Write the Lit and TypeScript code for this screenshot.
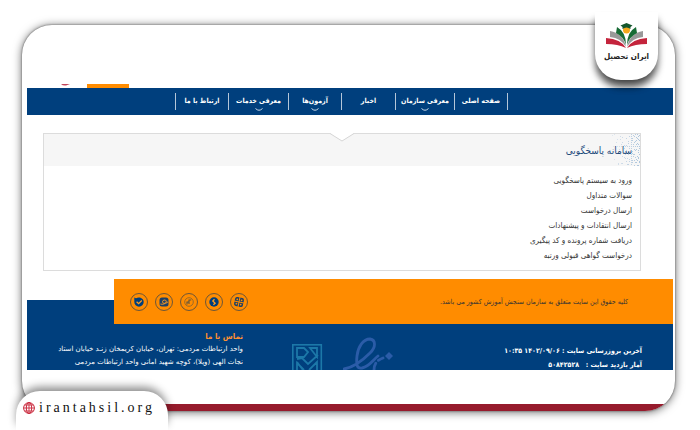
import { LitElement, html, css, svg } from "lit";
import { customElement } from "lit/decorators.js";

const NAV = [
  { label: "صفحه اصلی", menu: false },
  { label: "معرفی سازمان", menu: true },
  { label: "اخبار", menu: false },
  { label: "آزمون‌ها", menu: true },
  { label: "معرفی خدمات", menu: true },
  { label: "ارتباط با ما", menu: false },
];

const SERVICES = [
  "ورود به سیستم پاسخگویی",
  "سوالات متداول",
  "ارسال درخواست",
  "ارسال انتقادات و پیشنهادات",
  "دریافت شماره پرونده و کد پیگیری",
  "درخواست گواهی قبولی ورتبه",
];

const SOCIAL = [
  {
    name: "آپارات",
    glyph: svg`<g transform="rotate(12 9 9)"><rect x="4.500" y="4.500" width="9" height="9" rx="2" fill="#1d4068"/><path d="M9 4v10M4 9h10" stroke="#ff8c00" stroke-width="1"/><circle cx="6.800" cy="6.800" r=".9" fill="#ff8c00"/><circle cx="11.200" cy="6.800" r=".9" fill="#ff8c00"/><circle cx="6.800" cy="11.200" r=".9" fill="#ff8c00"/><circle cx="11.200" cy="11.200" r=".9" fill="#ff8c00"/></g>`,
  },
  {
    name: "سروش",
    glyph: svg`<circle cx="9" cy="9" r="4.700" fill="#003f7d"/><path d="M9.500 6.200 7.800 8l2.300 2.200-1.700 1.600" fill="none" stroke="#ff9c20" stroke-width="1.300"/>`,
  },
  {
    name: "روبیکا",
    glyph: svg`<circle cx="9" cy="9" r="4.300" fill="none" stroke="#9a6a2a" stroke-width="1"/><path d="M7 11.500v-2.500h2V7h2.200M9 9v2" fill="none" stroke="#5c5440" stroke-width="1.100"/>`,
  },
  {
    name: "ایتا",
    glyph: svg`<rect x="4.500" y="4.500" width="9" height="9" rx="2.500" fill="#1d4068"/><path d="M5.500 11c3 1 6-1 5.800-3-.3-1.500-3.800-1.300-3.800.6 0 2.400 3.500 2.200 5.500.2" fill="none" stroke="#ff9c20" stroke-width="1"/>`,
  },
  {
    name: "بله",
    glyph: svg`<path d="M4.300 4.500 6 5.300c3-1.900 7.700-.2 7.700 3.700A4.700 4.700 0 0 1 4.300 9z" fill="#003f7d"/><path d="m6.600 8.800 2 1.900 3.200-3.200" fill="none" stroke="#ff9c20" stroke-width="1.300"/>`,
  },
];

@customElement("app-root")
export class AppRoot extends LitElement {
  static styles = css`
    :host {
      display: block;
      position: relative;
      box-sizing: border-box;
      padding: 25px 25px 19px 22px;
      overflow: hidden;
      background: #fff;
      font-family: "DejaVu Sans Condensed", "DejaVu Sans", sans-serif;
      font-size: 8px;
      color: #333;
    }
    a {
      color: inherit;
      text-decoration: none;
    }
    ul {
      list-style: none;
      margin: 0;
      padding: 0;
    }
    h1,
    h2,
    p {
      margin: 0;
    }
    svg {
      display: block;
    }
    .card {
      border-radius: 30px;
      overflow: hidden;
      background: #fff;
      padding-top: 59px;
      box-shadow: 0 0 2px #555, 0 1px 10px rgba(0, 0, 0, 0.6);
    }
    .strip {
      height: 7px;
      margin-top: 34px;
      background: #961b2c;
    }
    .site {
      direction: rtl;
      margin: 0 2px 0 5px;
    }
    .top {
      display: flex;
      direction: ltr;
      height: 4px;
    }
    .mark {
      margin-left: 34px;
      width: 9px;
    }
    .tab {
      margin-left: 17px;
      width: 42px;
      background: #ff8c00;
    }
    nav {
      background: #003f7d;
      padding: 5px 165px 5px 148px;
    }
    .menu {
      display: grid;
      grid-template-columns: 53fr 59fr 54fr 53fr 60fr 53fr;
      border-right: 1px solid #b4c6d9;
      color: #fff;
      font-weight: bold;
      font-size: 7px;
    }
    .menu li {
      border-left: 1px solid #b4c6d9;
    }
    .menu a {
      position: relative;
      display: block;
      text-align: center;
      line-height: 17px;
      white-space: nowrap;
    }
    .arrow {
      position: absolute;
      left: 50%;
      bottom: -1px;
      margin-left: -4px;
    }
    .panel {
      margin: 18px 32px 0 16px;
      border: 1px solid #dcdcdc;
      padding-bottom: 7px;
    }
    .head {
      position: relative;
      display: flex;
      align-items: center;
      justify-content: flex-start;
      height: 32px;
      padding-right: 8px;
      background: #f6f6f6;
    }
    .head h1 {
      position: relative;
      font-size: 10px;
      font-weight: normal;
      color: #1d4a7c;
    }
    .dots {
      position: absolute;
      right: 0;
      top: 0;
    }
    .notch {
      position: absolute;
      left: 50%;
      top: -1px;
      margin-left: -12px;
    }
    .list {
      padding: 7px 8px 0 0;
      line-height: 15px;
    }
    footer {
      margin-top: 29px;
      background: #003f7d;
      color: #fff;
    }
    .bar {
      position: relative;
      top: -21px;
      display: flex;
      align-items: center;
      justify-content: space-between;
      height: 45px;
      margin: 0 0 -21px 87px;
      padding: 0 45px 0 16px;
      box-sizing: border-box;
      background: #ff8c00;
      color: #333;
      font-size: 7px;
    }
    .social {
      display: flex;
      gap: 7px;
    }
    .social a {
      display: block;
    }
    .info {
      display: flex;
      justify-content: space-between;
      height: 46px;
      padding: 0 31px 0 32px;
      overflow: hidden;
      font-size: 7px;
      line-height: 14px;
    }
    .stats {
      width: 200px;
      padding-top: 20px;
      font-weight: bold;
    }
    .emblems {
      display: flex;
      direction: ltr;
      gap: 20px;
      padding-top: 12px;
    }
    .contact {
      width: 184px;
      padding-top: 7px;
      white-space: nowrap;
      font-family: "DejaVu Sans", sans-serif;
      line-height: 13px;
    }
    .contact h2 {
      font-family: "DejaVu Sans Condensed", "DejaVu Sans", sans-serif;
      font-size: 8px;
      line-height: 12px;
      color: #ff9030;
    }
    .brand {
      position: absolute;
      right: 42px;
      top: 12px;
      width: 63px;
      height: 68px;
      border-radius: 0 0 26px 26px;
      background: #fff;
      box-shadow: 0 7px 8px -2px rgba(0, 0, 0, 0.7), 0 8px 6px rgba(0, 0, 0, 0.25);
      text-align: center;
      direction: rtl;
      font-weight: bold;
      font-size: 8px;
      line-height: 16px;
      color: #222;
    }
    .brand svg {
      margin: 11px auto 0;
    }
    .domain {
      position: absolute;
      left: 16px;
      bottom: 0;
      display: flex;
      align-items: center;
      gap: 4px;
      width: 152px;
      height: 39px;
      box-sizing: border-box;
      padding: 0 0 5px 7px;
      border-radius: 24px 24px 0 0;
      background: #fff;
      box-shadow: 0 -5px 8px -1px rgba(0, 0, 0, 0.45);
      font-family: "Liberation Serif", serif;
      font-size: 14px;
      letter-spacing: 3px;
      color: #111;
    }
  `;

  private dots() {
    const marks = [];
    for (let row = 0; row < 16; row++) {
      for (let col = 0; col < 14; col++) {
        const seed = (row * 37 + col * 53 + row * col * 11) % 17;
        if (seed < col + 2) {
          marks.push(svg`<rect x=${col * 2 + (seed % 2)} y=${row * 2 + (seed % 3 ? 0 : 1)} width="1" height="1" fill="#a9c3dc" opacity=${0.3 + col / 20}></rect>`);
        }
      }
    }
    return html`<svg class="dots" width="28" height="32" aria-hidden="true">${marks}</svg>`;
  }

  render() {
    return html`
      <div class="card">
        <div class="site">
          <div class="top">
            <svg class="mark" viewBox="0 0 9 4" aria-hidden="true"><path d="M0 0h9L5 1.500Q2 2 0 0" fill="#c2455a" /></svg>
            <span class="tab"></span>
          </div>
          <nav>
            <ul class="menu">
              ${NAV.map(
                (item) => html`<li>
                  <a href="#">${item.label}${item.menu
                    ? html`<svg class="arrow" width="8" height="3" viewBox="0 0 8 3"><path d="M.5.5Q4 4 7.500.5" fill="none" stroke="#c8d8e8" /></svg>`
                    : ""}</a>
                </li>`
              )}
            </ul>
          </nav>
          <main class="panel">
            <div class="head">
              ${this.dots()}
              <svg class="notch" width="24" height="9" viewBox="0 0 24 9" aria-hidden="true">
                <path d="M0 0h24L12 8z" fill="#fff" /><path d="M0 .5 12 8 24 .5" fill="none" stroke="#d6d6d6" />
              </svg>
              <h1>سامانه پاسخگویی</h1>
            </div>
            <ul class="list">
              ${SERVICES.map((text) => html`<li><a href="#">${text}</a></li>`)}
            </ul>
          </main>
          <footer>
            <div class="bar">
              <p>کلیه حقوق این سایت متعلق به سازمان سنجش آموزش کشور می باشد.</p>
              <div class="social">
                ${SOCIAL.map(
                  (item) => html`<a href="#" aria-label=${item.name}
                    ><svg width="18" height="18" viewBox="0 0 18 18"><circle cx="9" cy="9" r="8.500" fill="none" stroke="#5b503f" stroke-width=".9" />${item.glyph}</svg></a
                  >`
                )}
              </div>
            </div>
            <div class="info">
              <div class="stats">
                <p>آخرین بروزرسانی سایت : ۱۴۰۲/۰۹/۰۶ ۱۰:۳۵</p>
                <p>آمار بازدید سایت : &nbsp; ۵۰۸۴۲۵۲۸</p>
              </div>
              <div class="emblems" aria-hidden="true">
                <svg width="32" height="34" viewBox="0 0 32 34" fill="none" stroke="#1c78a8">
                  <rect x="1.800" y="8.800" width="28.500" height="40" stroke-width="1.600" />
                  <path d="M6 21v-9h7l4 4-4 5zM19 12h7v9zM6 23l5-1 6 6L27 19M6 34v-7l7 7M18 34l8-8v8M12 34l-6-8" stroke-width="1.800" />
                </svg>
                <svg width="52" height="34" viewBox="0 0 52 34" fill="none" stroke="#2b5ca8" stroke-width="2.800" stroke-linecap="round">
                  <path d="M1 33C12 31 20 24 27 17C33 11 33 4 27 3C20 3 15 11 14 20C13 29 14 33 19 32C26 31 30 24 35 20" />
                  <path d="M31 34Q31 25 40 22" stroke-dasharray="7 4" /><path d="m46 16 4 4-4 4-4-4z" fill="#2b5ca8" stroke="none" />
                </svg>
              </div>
              <div class="contact">
                <h2>تماس با ما</h2>
                <p>واحد ارتباطات مردمی: تهران، خیابان کریمخان زنـد خیابان استاد</p>
                <p>نجات الهی (ویلا)، کوچه شهید امانی واحد ارتباطات مردمی</p>
              </div>
            </div>
          </footer>
        </div>
        <div class="strip"></div>
      </div>
      <div class="brand">
        <svg width="41" height="26" viewBox="0 0 41 26" aria-hidden="true">
          <path d="M0 15q15 1 20 10-8-4-20-4zM41 15q-15 1-20 10 8-4 20-4z" fill="#c4243c" />
          <path d="M4 8q13 2 16 16Q15 15 4 14zM37 8q-13 2-16 16 5-9 16-10z" fill="#999" />
          <path d="M11 4q9 5 9 18Q18 14 10 10zM30 4q-9 5-9 18 2-8 10-12z" fill="#176b35" />
          <circle cx="20.500" cy="7" r="3.500" fill="#f4a81c" />
          <path d="m20.500 0 6 2.500-2 1.500v2q-4-3-8 0V4l-2-1.500z" fill="#14562c" />
        </svg>
        ایران تحصیل
      </div>
      <a class="domain" href="#">
        <svg width="12" height="12" viewBox="0 0 12 12" fill="none" stroke="#c9283c" aria-hidden="true">
          <circle cx="6" cy="6" r="5.400" /><ellipse cx="6" cy="6" rx="2.700" ry="5.400" /><path d="M6 .5v11M.5 6h11M1.500 3h9M1.500 9h9" stroke-width=".9" />
        </svg>
        irantahsil.org
      </a>
    `;
  }
}
